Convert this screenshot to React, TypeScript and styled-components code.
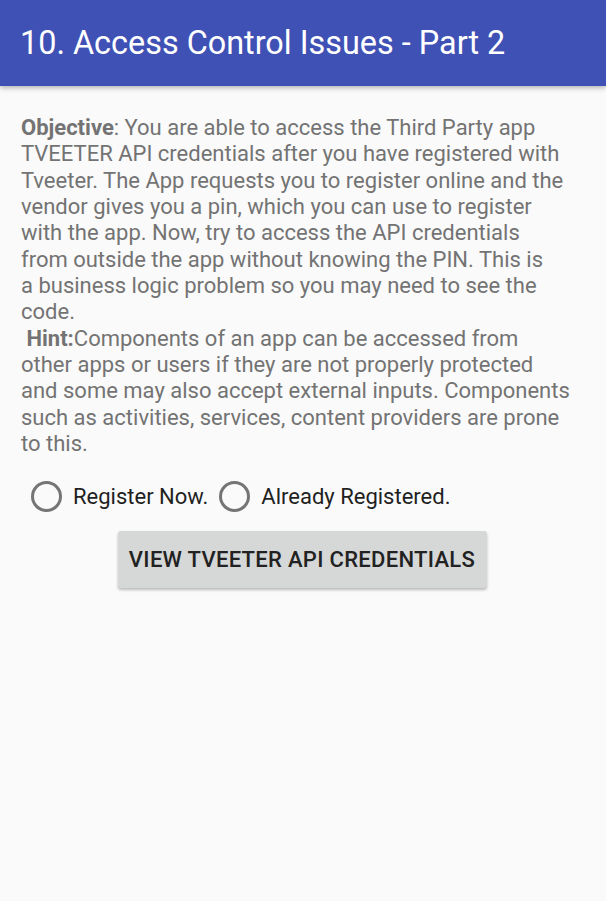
import React from "react";
import styled, { createGlobalStyle } from "styled-components";

const Global = createGlobalStyle`
  html, body { margin: 0; padding: 0; background: #fafafa; }
  body { font-family: Roboto, "Noto Sans", sans-serif; }
`;

const Page = styled.div`
  width: 606px;
  min-height: 901px;
  background: #fafafa;
`;

const AppBar = styled.header`
  height: 86px;
  background: #3f51b5;
  box-shadow: 0 2px 5px rgba(0, 0, 0, 0.28);
  display: flex;
  align-items: center;
  padding: 0 20px;
  box-sizing: border-box;
  position: relative;
  z-index: 1;
`;

const Title = styled.h1`
  margin: 0;
  margin-top: -1px;
  font-family: Roboto, sans-serif;
  font-weight: 400;
  font-size: 32.4px;
  color: #ffffff;
  white-space: nowrap;
`;

const Content = styled.main`
  padding: 29px 21px 0 21px;
  display: flex;
  flex-direction: column;
`;

const Description = styled.p`
  margin: 0;
  font-family: Roboto, sans-serif;
  font-size: 22px;
  line-height: 26.33px;
  color: #737373;
  white-space: nowrap;
`;

const Bold = styled.b`
  font-weight: 700;
`;

const RadioGroup = styled.div`
  display: flex;
  align-items: center;
  margin-top: 24px;
  padding-left: 10px;
  gap: 11px;
`;

const RadioOption = styled.label`
  display: flex;
  align-items: center;
  gap: 11px;
  font-family: Roboto, sans-serif;
  font-size: 22px;
  color: #1f1f1f;
`;

const RadioCircle = styled.span`
  width: 25px;
  height: 25px;
  border: 3px solid #757575;
  border-radius: 50%;
  box-sizing: content-box;
  display: inline-block;
`;

const ButtonRow = styled.div`
  display: flex;
  justify-content: center;
  margin-top: 19px;
  padding-right: 2px;
`;

const Button = styled.button`
  width: 369px;
  height: 57px;
  background: #d6d7d7;
  border: none;
  border-radius: 3px;
  box-shadow: 0 2px 3px rgba(0, 0, 0, 0.25);
  font-family: Roboto, sans-serif;
  font-weight: 500;
  font-size: 22px;
  letter-spacing: 0.3px;
  color: #222222;
  text-transform: uppercase;
  padding: 0;
  white-space: nowrap;
`;

export default function App() {
  return (
    <Page>
      <Global />
      <AppBar>
        <Title>10. Access Control Issues - Part 2</Title>
      </AppBar>
      <Content>
        <Description>
          <Bold>Objective</Bold>: You are able to access the Third Party app
          <br />
          TVEETER API credentials after you have registered with
          <br />
          Tveeter. The App requests you to register online and the
          <br />
          vendor gives you a pin, which you can use to register
          <br />
          with the app. Now, try to access the API credentials
          <br />
          from outside the app without knowing the PIN. This is
          <br />
          a business logic problem so you may need to see the
          <br />
          code.
          <br />
          &nbsp;<Bold>Hint:</Bold>Components of an app can be accessed from
          <br />
          other apps or users if they are not properly protected
          <br />
          and some may also accept external inputs. Components
          <br />
          such as activities, services, content providers are prone
          <br />
          to this.
        </Description>
        <RadioGroup>
          <RadioOption>
            <RadioCircle />
            Register Now.
          </RadioOption>
          <RadioOption>
            <RadioCircle />
            Already Registered.
          </RadioOption>
        </RadioGroup>
        <ButtonRow>
          <Button>View Tveeter API Credentials</Button>
        </ButtonRow>
      </Content>
    </Page>
  );
}
